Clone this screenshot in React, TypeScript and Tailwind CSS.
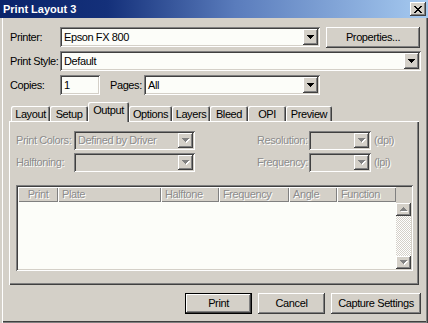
import React from "react";

const RAISED =
  "shadow-[inset_-1px_-1px_0_#404040,inset_1px_1px_0_#ffffff,inset_-2px_-2px_0_#808080]";
const SUNKEN =
  "shadow-[inset_1px_1px_0_#808080,inset_-1px_-1px_0_#ffffff,inset_2px_2px_0_#404040,inset_-2px_-2px_0_#d4d0c8]";
const DIS = "text-[#8c8c8c] [text-shadow:1px_1px_0_#ffffff]";

function Arrow({ disabled, up }: { disabled?: boolean; up?: boolean }) {
  const rows = [7, 5, 3, 1];
  const order = up ? [...rows].reverse() : rows;
  const rects = (fill: string, dx: number, dy: number) =>
    order.map((w, i) => (
      <rect
        key={fill + i}
        x={(7 - w) / 2 + dx}
        y={i + dy}
        width={w}
        height={1}
        fill={fill}
      />
    ));
  return (
    <svg width="8" height="5" viewBox="0 0 8 5" shapeRendering="crispEdges">
      {disabled && rects("#ffffff", 1, 1)}
      {rects(disabled ? "#808080" : "#000000", 0, 0)}
    </svg>
  );
}

function CloseGlyph() {
  const g = [
    "xx....xx",
    ".xx..xx.",
    "..xxxx..",
    "...xx...",
    "..xxxx..",
    ".xx..xx.",
    "xx....xx",
  ];
  return (
    <svg width="8" height="7" viewBox="0 0 8 7" shapeRendering="crispEdges">
      {g.flatMap((row, y) =>
        row.split("").map((c, x) =>
          c === "x" ? <rect key={`${x}-${y}`} x={x} y={y} width={1} height={1} fill="#000" /> : null
        )
      )}
    </svg>
  );
}

function Combo({
  className,
  value,
  disabled,
}: {
  className: string;
  value?: string;
  disabled?: boolean;
}) {
  return (
    <div
      className={`flex items-stretch p-[2px] ${SUNKEN} ${
        disabled ? "bg-[#d4d0c8]" : "bg-[#fcfdf9]"
      } ${className}`}
    >
      <div
        className={`flex flex-1 items-center overflow-hidden whitespace-nowrap pl-[2px] ${
          disabled ? DIS : ""
        }`}
      >
        {value}
      </div>
      <div className={`flex w-[15px] items-center justify-center bg-[#d4d0c8] ${RAISED}`}>
        <Arrow disabled={disabled} />
      </div>
    </div>
  );
}

function Tab({ label, w, active }: { label: string; w: string; active?: boolean }) {
  return (
    <div
      className={`flex items-center justify-center whitespace-nowrap rounded-t-[2px] bg-[#d4d0c8] shadow-[inset_1px_1px_0_#ffffff,inset_-1px_0_0_#404040,inset_-2px_0_0_#808080] ${w} ${
        active ? "relative z-10 -mb-[1px] h-[20px] pb-[3px]" : "h-[15px] pt-[1px]"
      }`}
    >
      {label}
    </div>
  );
}

function HeaderCell({ label, w, center }: { label: string; w: string; center?: boolean }) {
  return (
    <div
      className={`flex h-full items-center whitespace-nowrap bg-[#d4d0c8] shadow-[inset_1px_1px_0_#ffffff,inset_-1px_-1px_0_#808080] ${DIS} ${w} ${
        center ? "justify-center" : "pl-[4px]"
      }`}
    >
      {label}
    </div>
  );
}

function Button({
  children,
  w,
  isDefault,
}: {
  children: React.ReactNode;
  w: string;
  isDefault?: boolean;
}) {
  return (
    <div
      className={`flex h-[21px] items-center justify-center whitespace-nowrap bg-[#d4d0c8] ${RAISED} ${w} ${
        isDefault ? "border border-black" : ""
      }`}
    >
      {children}
    </div>
  );
}

export default function App() {
  return (
    <div className="relative h-[323px] w-[428px] overflow-hidden bg-[#d4d0c8] font-['Liberation_Sans',Arial,sans-serif] text-[11px] leading-none tracking-[-0.4px] text-black shadow-[inset_2px_0_0_#d4d0c8,inset_3px_0_0_#ffffff,inset_-1px_0_0_#404040,inset_-2px_0_0_#808080,inset_0_-1px_0_#808080,inset_0_-2px_0_#404040]">
      {/* Title bar */}
      <div className="flex h-[18px] items-center justify-between bg-[linear-gradient(90deg,#0a246a_0%,#14307a_25%,#5a7cbc_55%,#a6caf0_100%)] pl-[3px] pr-[2px]">
        <span className="font-bold tracking-normal text-white">Print Layout 3</span>
        <div className={`flex h-[14px] w-[16px] items-center justify-center bg-[#d4d0c8] ${RAISED}`}>
          <CloseGlyph />
        </div>
      </div>

      {/* Top rows */}
      <div className="flex flex-col gap-[4px] pl-[10px] pt-[9px]">
        <div className="flex h-[20px] items-center whitespace-nowrap">
          <span className="w-[50px]">Printer:</span>
          <Combo className="h-[20px] w-[260px]" value="Epson FX 800" />
          <div className="ml-[6px]">
            <Button w="w-[94px]">Properties...</Button>
          </div>
        </div>
        <div className="flex h-[20px] items-center whitespace-nowrap">
          <span className="w-[50px]">Print Style:</span>
          <Combo className="h-[20px] w-[361px]" value="Default" />
        </div>
        <div className="flex h-[20px] items-center whitespace-nowrap">
          <span className="w-[50px]">Copies:</span>
          <div className={`flex h-[20px] w-[40px] items-center bg-[#fcfdf9] pl-[4px] ${SUNKEN}`}>1</div>
          <span className="ml-[10px] w-[34px]">Pages:</span>
          <Combo className="h-[20px] w-[176px]" value="All" />
        </div>
      </div>

      {/* Tabs + panel */}
      <div className="ml-[9px] mt-[7px] w-[410px]">
        <div className="flex h-[19px] items-end pl-[2px]">
          <Tab label="Layout" w="w-[39px]" />
          <Tab label="Setup" w="w-[38px]" />
          <Tab label="Output" w="w-[41px]" active />
          <Tab label="Options" w="w-[43px]" />
          <Tab label="Layers" w="w-[38px]" />
          <Tab label="Bleed" w="w-[38px]" />
          <Tab label="OPI" w="w-[38px]" />
          <Tab label="Preview" w="w-[46px]" />
        </div>
        <div className="flex h-[164px] w-[410px] flex-col pl-[7px] pt-[10px] shadow-[inset_1px_1px_0_#ffffff,inset_-1px_-1px_0_#404040,inset_-2px_-2px_0_#808080]">
          <div className="flex h-[19px] items-center whitespace-nowrap">
            <span className={`w-[58px] ${DIS}`}>Print Colors:</span>
            <Combo className="h-[19px] w-[121px]" value="Defined by Driver" disabled />
            <span className={`ml-[62px] w-[52px] ${DIS}`}>Resolution:</span>
            <Combo className="h-[19px] w-[62px]" disabled />
            <span className={`ml-[3px] ${DIS}`}>(dpi)</span>
          </div>
          <div className="mt-[3px] flex h-[19px] items-center whitespace-nowrap">
            <span className={`w-[58px] ${DIS}`}>Halftoning:</span>
            <Combo className="h-[19px] w-[121px]" disabled />
            <span className={`ml-[62px] w-[52px] ${DIS}`}>Frequency:</span>
            <Combo className="h-[19px] w-[62px]" disabled />
            <span className={`ml-[3px] ${DIS}`}>(lpi)</span>
          </div>

          {/* List */}
          <div className={`mt-[13px] flex h-[86px] w-[397px] p-[2px] ${SUNKEN}`}>
            <div className="flex flex-1 flex-col">
              <div className="flex h-[15px]">
                <HeaderCell label="Print" w="w-[40px]" center />
                <HeaderCell label="Plate" w="w-[103px]" />
                <HeaderCell label="Halftone" w="w-[58px]" />
                <HeaderCell label="Frequency" w="w-[70px]" />
                <HeaderCell label="Angle" w="w-[48px]" />
                <HeaderCell label="Function" w="w-[59px]" />
              </div>
              <div className="flex-1 bg-[#fcfdf9]" />
            </div>
            <div className="flex w-[15px] flex-col bg-[#d4d0c8]">
              <div className="h-[16px]" />
              <div className={`flex h-[13px] items-center justify-center ${RAISED}`}>
                <Arrow up disabled />
              </div>
              <div className="flex-1 bg-[image:repeating-conic-gradient(#ffffff_0%_25%,#d4d0c8_0%_50%)] bg-[length:2px_2px]" />
              <div className={`flex h-[13px] items-center justify-center ${RAISED}`}>
                <Arrow disabled />
              </div>
            </div>
          </div>
        </div>
      </div>

      {/* Buttons */}
      <div className="mt-[8px] flex justify-end gap-[6px] pr-[7px]">
        <Button w="w-[67px]" isDefault>
          Print
        </Button>
        <Button w="w-[67px]">Cancel</Button>
        <Button w="w-[90px]">Capture Settings</Button>
      </div>
    </div>
  );
}
